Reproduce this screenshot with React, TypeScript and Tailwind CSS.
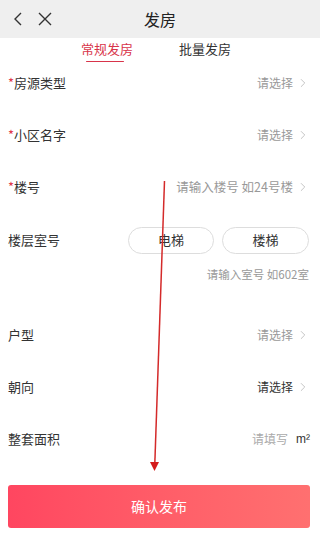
import { ChevronRight } from 'lucide-react'

// ─── Row helpers ──────────────────────────────────────────────────────────────

function Label({ text, required }: { text: string; required?: boolean }) {
  return (
    <span className="text-[13px] text-[#333]">
      {required && <span className="text-[#e0374a]">*</span>}
      {text}
    </span>
  )
}

function SelectRow({
  label,
  required,
  value,
  dark,
  wide,
}: {
  label: string
  required?: boolean
  value: string
  dark?: boolean
  wide?: boolean
}) {
  return (
    <div className="h-[52px] flex items-center justify-between pl-[8px] pr-[10px]">
      <Label text={label} required={required} />
      <div className="flex items-center gap-[3px]">
        <span
          className={
            dark
              ? 'text-[12px] text-[#333]'
              : wide
              ? 'text-[12.5px] text-[#999]'
              : 'text-[12px] text-[#999]'
          }
        >
          {value}
        </span>
        <ChevronRight className="w-[14px] h-[14px] text-[#bbb]" strokeWidth={1.5} />
      </div>
    </div>
  )
}

export default function App() {
  return (
    <div
      className="relative w-[320px] h-[556px] bg-white overflow-hidden"
      style={{ fontFamily: '"Noto Sans CJK SC", "Noto Sans", sans-serif' }}
    >
      {/* Header */}
      <div className="h-[38px] bg-[#efefef] flex items-center relative">
        <div className="flex items-center gap-[14px] pl-[12px]">
          <svg width="12" height="14" viewBox="0 0 12 14" fill="none" stroke="#333" strokeWidth="1.4">
            <path d="M9 1 L3 7 L9 13" />
          </svg>
          <svg width="14" height="14" viewBox="0 0 14 14" fill="none" stroke="#333" strokeWidth="1.4">
            <path d="M1 1 L13 13 M13 1 L1 13" />
          </svg>
        </div>
        <span className="absolute left-1/2 -translate-x-1/2 text-[16px] text-[#222]">发房</span>
      </div>

      {/* Tabs */}
      <div className="h-[24px] flex justify-center gap-[46px] pr-[8px]">
        <div className="flex flex-col items-center">
          <span className="text-[13px] leading-[22px] text-[#d8344a]">常规发房</span>
          <div className="w-[38px] h-[3px] rounded-full bg-[#d8344a] mt-[1px] mr-[4px]" />
        </div>
        <span className="text-[13px] leading-[22px] text-[#333]">批量发房</span>
      </div>

      {/* Form */}
      <div className="mt-[-5px] flex flex-col">
        <SelectRow label="房源类型" required value="请选择" />
        <SelectRow label="小区名字" required value="请选择" />
        <SelectRow label="楼号" required value="请输入楼号 如24号楼" wide />

        <div className="h-[54px] flex items-center justify-between pl-[8px] pr-[11px]">
          <Label text="楼层室号" />
          <div className="flex gap-[8px]">
            <div className="w-[86px] h-[27px] rounded-full border border-[#ddd] flex items-center justify-center text-[13px] text-[#333]">
              电梯
            </div>
            <div className="w-[87px] h-[27px] rounded-full border border-[#ddd] flex items-center justify-center text-[13px] text-[#333]">
              楼梯
            </div>
          </div>
        </div>
        <div className="h-[16px] flex items-center justify-end pr-[11px]">
          <span className="text-[11.5px] text-[#999]">请输入室号 如602室</span>
        </div>

        <div className="mt-[26px]">
          <SelectRow label="户型" value="请选择" />
          <SelectRow label="朝向" value="请选择" dark />
          <div className="h-[52px] flex items-center justify-between pl-[8px] pr-[10px]">
            <Label text="整套面积" />
            <div className="flex items-center gap-[8px]">
              <span className="text-[12px] text-[#aaa]">请填写</span>
              <span className="text-[12px] text-[#333]" style={{ fontFamily: '"Liberation Sans", sans-serif' }}>
                m²
              </span>
            </div>
          </div>
        </div>
      </div>

      {/* Submit */}
      <div className="px-[8px] mt-[20px]">
        <button className="w-[302px] h-[43px] rounded-[3px] bg-gradient-to-r from-[#ff4660] to-[#ff7070] text-white text-[14px]">
          确认发布
        </button>
      </div>

      {/* Annotation arrow overlay */}
      <svg className="absolute left-0 top-0 pointer-events-none" width="320" height="556">
        <line x1="164.5" y1="181" x2="154.8" y2="464" stroke="#d42a2a" strokeWidth="1.5" />
        <polygon points="150,462 159,462 154.5,471" fill="#d41c1c" />
      </svg>
    </div>
  )
}
